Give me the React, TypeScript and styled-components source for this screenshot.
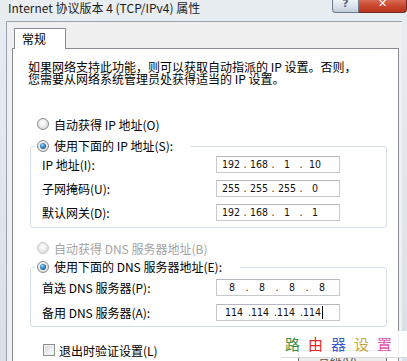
import React from "react";
import styled, { createGlobalStyle, css } from "styled-components";

const GlobalStyle = createGlobalStyle`
  html, body { margin: 0; padding: 0; }
  body { width: 407px; height: 361px; overflow: hidden; background: #dde3e9; }
  * { box-sizing: border-box; }
`;

const ui = `"Noto Sans CJK SC", "DejaVu Sans", sans-serif`;

const Window = styled.div`
  position: relative;
  width: 407px;
  height: 361px;
  overflow: hidden;
  display: flex;
  flex-direction: column;
  background: linear-gradient(to bottom, #e8edf2 0%, #d9e0e7 100%);
  font-family: ${ui};
  font-size: 12px;
  color: #000;
`;

const TitleBar = styled.div`
  height: 21px;
  flex: none;
  display: flex;
  align-items: flex-start;
`;

const Title = styled.div`
  padding: 0 0 0 8px;
  font-size: 12px;
  line-height: 16px;
  color: #1b1b1b;
  white-space: nowrap;
  text-shadow: 0 0 8px rgba(255, 255, 255, 0.95);
`;

const CaptionButtons = styled.div`
  margin-left: auto;
  display: flex;
  flex: none;
  height: 13px;
  overflow: hidden;
`;

const CaptionButton = styled.div<{ $close?: boolean }>`
  flex: none;
  width: ${(p) => (p.$close ? 48 : 27)}px;
  height: 13px;
  display: flex;
  align-items: flex-start;
  justify-content: center;
  font-family: "DejaVu Sans", sans-serif;
  font-weight: bold;
  font-size: 11px;
  line-height: 8px;
  border: 1px solid ${(p) => (p.$close ? "#6e2d22" : "#6f7c8c")};
  border-top: none;
  border-left-width: ${(p) => (p.$close ? 0 : 1)}px;
  border-radius: ${(p) => (p.$close ? "0 0 4px 0" : "0 0 0 4px")};
  background-color: ${(p) => (p.$close ? "#c9472f" : "#d9e0e8")};
  background-image: ${(p) =>
    p.$close
      ? "linear-gradient(to bottom, #d86a54 0%, #c9472f 50%, #b8331d 100%)"
      : "linear-gradient(to bottom, #eef2f6 0%, #d9e0e8 55%, #c3cdd9 100%)"};
  color: ${(p) => (p.$close ? "#ffffff" : "#56647a")};
`;

const Client = styled.div`
  flex: 1;
  min-height: 0;
  margin: 0 5px 0 6px;
  padding: 6px 3px 0 5px;
  background: #f0f0f0;
  border-left: 1px solid #9aa4b0;
  border-top: 1px solid #9aa4b0;
  display: flex;
  flex-direction: column;
`;

const TabStrip = styled.div`
  display: flex;
  padding-left: 2px;
`;

const Tab = styled.div`
  position: relative;
  z-index: 1;
  width: 52px;
  height: 21px;
  margin-bottom: -1px;
  padding-left: 7px;
  line-height: 20px;
  background: #fff;
  border: 1px solid #898c95;
  border-bottom: none;
`;

const Panel = styled.div`
  flex: 1;
  background: #fff;
  border: 1px solid #898c95;
  border-bottom: none;
  display: flex;
  flex-direction: column;
`;

const Intro = styled.p`
  margin: 12px 0 0 15px;
  line-height: 12px;
  white-space: nowrap;
`;

const Choice = styled.div<{ $top?: number; $disabled?: boolean }>`
  display: flex;
  align-items: center;
  gap: 5px;
  height: 16px;
  white-space: nowrap;
  color: ${(p) => (p.$disabled ? "#a3a3a3" : "#000")};
`;

const StandaloneChoice = styled(Choice)`
  margin: ${(p) => p.$top ?? 0}px 0 0 24px;
`;

const Radio = styled.span<{ $checked?: boolean; $disabled?: boolean }>`
  position: relative;
  flex: none;
  width: 12px;
  height: 12px;
  border-radius: 50%;
  border: 1px solid ${(p) => (p.$disabled ? "#c9c9c9" : "#8a8a8a")};
  background: radial-gradient(circle at 45% 40%, #ffffff 0%, #f0f0f0 35%, #cfcfcf 100%);
  ${(p) =>
    p.$checked &&
    css`
      &::after {
        content: "";
        position: absolute;
        left: 2px;
        top: 2px;
        width: 6px;
        height: 6px;
        border-radius: 50%;
        background: radial-gradient(circle at 40% 35%, #bfe6ff 0%, #3c8fd0 35%, #143f6e 100%);
      }
    `}
`;

const Group = styled.fieldset<{ $top: number; $padTop: number; $gap: number; $padBottom: number }>`
  margin: ${(p) => p.$top}px 0 0 17px;
  width: 357px;
  padding: ${(p) => p.$padTop}px 0 ${(p) => p.$padBottom}px 4px;
  border: 1px solid #d5dfe5;
  border-radius: 3px;
  display: flex;
  flex-direction: column;
  gap: ${(p) => p.$gap}px;
`;

const Legend = styled.legend`
  padding: 0 18px 0 2px;
  line-height: 16px;
`;

const FieldRow = styled.div`
  display: grid;
  grid-template-columns: 174px 124px;
  align-items: center;
  height: 17px;
  padding-left: 7px;
  white-space: nowrap;
`;

const IpBox = styled.div`
  height: 17px;
  width: 124px;
  padding-left: 3px;
  display: flex;
  align-items: center;
  background: #fff;
  border: 1px solid #c6c8cc;
  border-top-color: #b5b8be;
  font-family: "DejaVu Sans Condensed", "DejaVu Sans", sans-serif;
  font-size: 10.5px;
  line-height: 15px;
  color: #111;
`;

const Octet = styled.span<{ $w: number }>`
  width: ${(p) => p.$w}px;
  text-align: center;
`;

const Dot = styled.span`
  width: 6px;
  text-align: center;
`;

const Typed = styled.span`
  padding-left: 5px;
  word-spacing: 2px;
  white-space: pre;
`;

const Caret = styled.span`
  display: inline-block;
  width: 1px;
  height: 13px;
  margin-left: 1px;
  vertical-align: -3px;
  background: #000;
`;

const BottomRow = styled.div`
  display: flex;
  align-items: flex-start;
  margin-top: 15px;
  padding: 0 11px 0 30px;
`;

const CheckLabel = styled.div`
  display: flex;
  align-items: center;
  gap: 4px;
  height: 16px;
  white-space: nowrap;
`;

const CheckBox = styled.span`
  flex: none;
  width: 12px;
  height: 12px;
  border: 1px solid #8e8f8f;
  background: linear-gradient(135deg, #d4d4d4 0%, #f4f4f4 70%, #ffffff 100%);
  box-shadow: inset 0 0 0 1px #f0f0f0;
`;

const Button = styled.div`
  margin: 8px 0 0 auto;
  width: 89px;
  height: 23px;
  line-height: 21px;
  text-align: center;
  border: 1px solid #707070;
  border-radius: 3px;
  background: linear-gradient(to bottom, #f2f2f2 0%, #ebebeb 50%, #dddddd 51%, #cfcfcf 100%);
  color: #555;
`;

const Watermark = styled.div`
  position: absolute;
  left: 281px;
  top: 331px;
  width: 126px;
  height: 27px;
  padding: 4px 0 0 4px;
  background: rgba(255, 255, 255, 0.88);
  border-bottom: 1px solid #dadada;
  font-size: 15px;
  line-height: 18px;
  letter-spacing: 8px;
  white-space: nowrap;
`;

const Mark = styled.span<{ $color: string }>`
  color: ${(p) => p.$color};
`;

type Field = { label: string; octets?: string[]; typed?: string };

function IpField({ label, octets, typed, w }: Field & { w: number }) {
  return (
    <FieldRow>
      <span>{label}</span>
      <IpBox>
        {typed ? (
          <Typed>
            {typed}
            <Caret />
          </Typed>
        ) : (
          octets!.map((o, i) => (
            <React.Fragment key={i}>
              {i > 0 && <Dot>.</Dot>}
              <Octet $w={w}>{o}</Octet>
            </React.Fragment>
          ))
        )}
      </IpBox>
    </FieldRow>
  );
}

const ipFields: Field[] = [
  { label: "IP 地址(I):", octets: ["192", "168", "1", "10"] },
  { label: "子网掩码(U):", octets: ["255", "255", "255", "0"] },
  { label: "默认网关(D):", octets: ["192", "168", "1", "1"] },
];

const dnsFields: Field[] = [
  { label: "首选 DNS 服务器(P):", octets: ["8", "8", "8", "8"] },
  { label: "备用 DNS 服务器(A):", typed: "114 .114 .114 .114" },
];

const marks = [
  { ch: "路", color: "#3c8f3e" },
  { ch: "由", color: "#e3262c" },
  { ch: "器", color: "#3c5ccc" },
  { ch: "设", color: "#c9a43f" },
  { ch: "置", color: "#e057b4" },
];

export default function App() {
  return (
    <>
      <GlobalStyle />
      <Window>
        <TitleBar>
          <Title>Internet 协议版本 4 (TCP/IPv4) 属性</Title>
          <CaptionButtons>
            <CaptionButton>?</CaptionButton>
            <CaptionButton $close>✕</CaptionButton>
          </CaptionButtons>
        </TitleBar>
        <Client>
          <TabStrip>
            <Tab>常规</Tab>
          </TabStrip>
          <Panel>
            <Intro>
              如果网络支持此功能，则可以获取自动指派的 IP 设置。否则，
              <br />
              您需要从网络系统管理员处获得适当的 IP 设置。
            </Intro>

            <StandaloneChoice $top={31}>
              <Radio />
              自动获得 IP 地址(O)
            </StandaloneChoice>
            <Group $top={6} $padTop={2} $gap={7} $padBottom={6}>
              <Legend>
                <Choice>
                  <Radio $checked />
                  使用下面的 IP 地址(S):
                </Choice>
              </Legend>
              {ipFields.map((f) => (
                <IpField key={f.label} {...f} w={22} />
              ))}
            </Group>

            <StandaloneChoice $top={12} $disabled>
              <Radio $disabled />
              自动获得 DNS 服务器地址(B)
            </StandaloneChoice>
            <Group $top={3} $padTop={4} $gap={8} $padBottom={5}>
              <Legend>
                <Choice>
                  <Radio $checked />
                  使用下面的 DNS 服务器地址(E):
                </Choice>
              </Legend>
              {dnsFields.map((f) => (
                <IpField key={f.label} {...f} w={24} />
              ))}
            </Group>

            <BottomRow>
              <CheckLabel>
                <CheckBox />
                退出时验证设置(L)
              </CheckLabel>
              <Button>高级(V)...</Button>
            </BottomRow>
          </Panel>
        </Client>
        <Watermark>
          {marks.map((m) => (
            <Mark key={m.ch} $color={m.color}>
              {m.ch}
            </Mark>
          ))}
        </Watermark>
      </Window>
    </>
  );
}
